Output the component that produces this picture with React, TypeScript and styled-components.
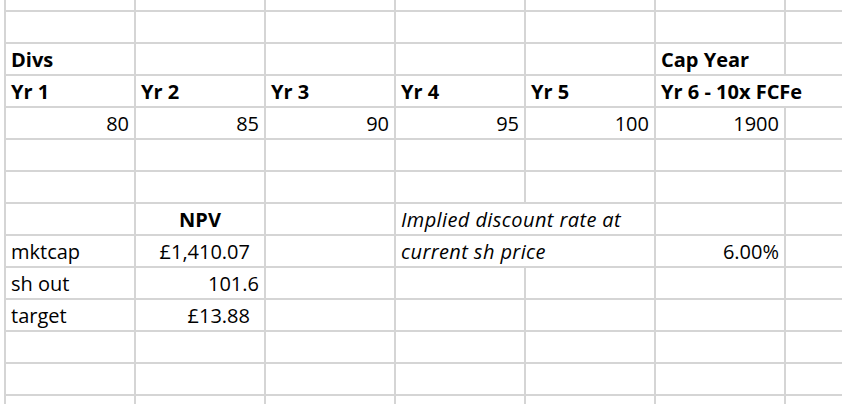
import styled, { createGlobalStyle } from "styled-components";

type Align = "left" | "center" | "right";

interface CellData {
  col: number;
  text: string;
  align?: Align;
  bold?: boolean;
  italic?: boolean;
  span?: number;
  padRight?: number;
}

const GRID = "#d5d5d5";
const COLS = 7;

// 시트 행 데이터 (0번 행은 위쪽 잘린 행)
const rows: CellData[][] = [
  [],
  [],
  [
    { col: 0, text: "Divs", bold: true },
    { col: 5, text: "Cap Year", bold: true },
  ],
  [
    { col: 0, text: "Yr 1", bold: true },
    { col: 1, text: "Yr 2", bold: true },
    { col: 2, text: "Yr 3", bold: true },
    { col: 3, text: "Yr 4", bold: true },
    { col: 4, text: "Yr 5", bold: true },
    { col: 5, text: "Yr 6 - 10x FCFe", bold: true, span: 2 },
  ],
  [
    { col: 0, text: "80", align: "right" },
    { col: 1, text: "85", align: "right" },
    { col: 2, text: "90", align: "right" },
    { col: 3, text: "95", align: "right" },
    { col: 4, text: "100", align: "right" },
    { col: 5, text: "1900", align: "right" },
  ],
  [],
  [],
  [
    { col: 1, text: "NPV", bold: true, align: "center" },
    { col: 3, text: "Implied discount rate at", italic: true, span: 2 },
  ],
  [
    { col: 0, text: "mktcap" },
    { col: 1, text: "£1,410.07", align: "right", padRight: 14 },
    { col: 3, text: "current sh price", italic: true, span: 2 },
    { col: 5, text: "6.00%", align: "right" },
  ],
  [
    { col: 0, text: "sh out" },
    { col: 1, text: "101.6", align: "right" },
  ],
  [
    { col: 0, text: "target" },
    { col: 1, text: "£13.88", align: "right", padRight: 14 },
  ],
  [],
  [],
  [],
];

// 빈 칸까지 채운 행 만들기
function fillRow(cells: CellData[]): CellData[] {
  const out: CellData[] = [];
  let c = 0;
  while (c < COLS) {
    const found = cells.find((cell) => cell.col === c);
    if (found) {
      out.push(found);
      c += found.span ?? 1;
    } else {
      out.push({ col: c, text: "" });
      c += 1;
    }
  }
  return out;
}

function App() {
  return (
    <>
      <GlobalStyle />
      <Sheet>
        {rows.map((row, r) =>
          fillRow(row).map((cell) => (
            <Cell
              key={`${r}-${cell.col}`}
              $align={cell.align ?? "left"}
              $bold={!!cell.bold}
              $italic={!!cell.italic}
              $span={cell.span ?? 1}
              $padRight={cell.padRight ?? 5}
            >
              {cell.text}
            </Cell>
          ))
        )}
      </Sheet>
    </>
  );
}

export default App;

const GlobalStyle = createGlobalStyle`
  html, body {
    margin: 0;
    padding: 0;
    background: #ffffff;
    overflow: hidden;
  }
`;

const Sheet = styled.div`
  display: grid;
  grid-template-columns: repeat(${COLS}, 130px);
  grid-template-rows: 12px repeat(13, 32px);
  width: 842px;
  height: 404px;
  padding-left: 4px;
  box-sizing: border-box;
  overflow: hidden;
  font-family: "Open Sans", "Liberation Sans", sans-serif;
  font-size: 20px;
  color: #000000;
`;

const justify = { left: "flex-start", center: "center", right: "flex-end" };

const Cell = styled.div<{
  $align: Align;
  $bold: boolean;
  $italic: boolean;
  $span: number;
  $padRight: number;
}>`
  grid-column: span ${({ $span }) => $span};
  display: flex;
  align-items: flex-end;
  justify-content: ${({ $align }) => justify[$align]};
  box-sizing: border-box;
  min-width: 0;
  padding: 0 ${({ $padRight }) => $padRight}px 2px 5px;
  border-left: 2px solid ${GRID};
  border-bottom: 2px solid ${GRID};
  font-weight: ${({ $bold }) => ($bold ? 700 : 400)};
  font-style: ${({ $italic }) => ($italic ? "italic" : "normal")};
  letter-spacing: ${({ $italic }) => ($italic ? "0.4px" : "0")};
  line-height: 24px;
  white-space: nowrap;
  overflow: hidden;
`;
